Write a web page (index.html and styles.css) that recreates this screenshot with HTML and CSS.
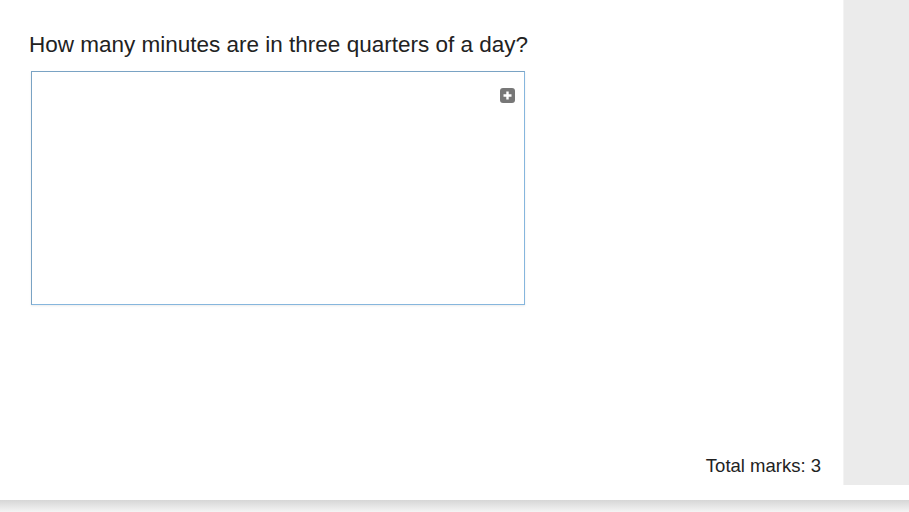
FILE: index.html
```html
<!DOCTYPE html>
<html>
<head>
<meta charset="utf-8">
<link rel="stylesheet" href="styles.css">
</head>
<body>
<div class="page">
  <div class="top">
    <main class="main">
      <p class="question">How many minutes are in three quarters of a day?</p>
      <div class="answer">
        <span class="expand" aria-label="expand">
          <svg width="15" height="15" viewBox="0 0 15 15"><rect x="0" y="0" width="15" height="15" rx="3" fill="#777"/><path d="M7.5 3.5v8M3.5 7.5h8" stroke="#fff" stroke-width="2.4"/></svg>
        </span>
      </div>
      <div class="marks">Total marks: 3</div>
    </main>
    <aside class="side"></aside>
  </div>
  <div class="gap"></div>
  <div class="shade"></div>
</div>
</body>
</html>
```
FILE: styles.css
```css
html, body { margin: 0; padding: 0; background: #fff; }
body { font-family: "Liberation Sans", Arial, sans-serif; color: #222; }
.page { width: 909px; height: 512px; display: flex; flex-direction: column; overflow: hidden; }
.top { height: 485px; display: flex; }
.main { flex: 1; display: flex; flex-direction: column; padding: 0 22px 0 29px; }
.question { margin: 32px 0 0 0; font-size: 22.5px; line-height: 26px; }
.answer {
  margin: 13px 0 0 2px; width: 492px; height: 232px;
  border: 1px solid #86b6dd; border-top-color: #7aa3c4; border-left-color: #7aa3c4;
  box-shadow: 0 1px 2px rgba(0,0,0,0.08);
  display: flex; justify-content: flex-end; align-items: flex-start;
}
.expand { margin: 16px 9px 0 0; display: block; height: 15px; }
.marks { margin-top: auto; align-self: flex-end; font-size: 18.5px; line-height: 22px; padding-bottom: 8px; }
.side { width: 65px; background: #ebebeb; border-left: 1px solid #f3f3f3; }
.gap { height: 15px; }
.shade { flex: 1; background: linear-gradient(#d6d6d6, #f4f4f4); }
```
